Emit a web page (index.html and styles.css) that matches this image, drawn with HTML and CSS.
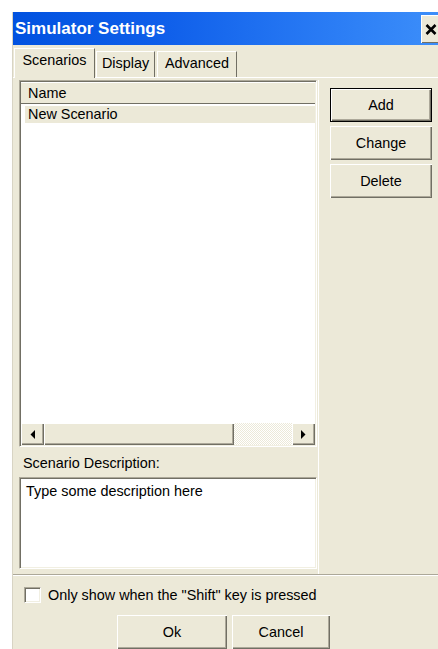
FILE: index.html
```html
<!DOCTYPE html>
<html lang="en">
<head>
<meta charset="utf-8">
<title>Simulator Settings</title>
<link rel="stylesheet" href="styles.css">
</head>
<body>
<div class="window">
  <div class="titlebar">
    <span class="title">Simulator Settings</span>
    <span class="close" aria-label="Close">
      <svg width="12" height="11" viewBox="0 0 12 11"><path d="M1.5 1 L10.5 10 M10.5 1 L1.5 10" stroke="#000" stroke-width="2.6" fill="none"/></svg>
    </span>
  </div>

  <div class="tabs">
    <div class="tab tab-scenarios active">Scenarios</div>
    <div class="tab tab-display">Display</div>
    <div class="tab tab-advanced">Advanced</div>
  </div>

  <div class="panel">
    <div class="left">
      <div class="listbox sunken">
        <div class="list-header">Name</div>
        <div class="list-rows">
          <div class="row selected">New Scenario</div>
        </div>
        <div class="hscroll">
          <div class="sb-btn raised">
            <svg width="5" height="9" viewBox="0 0 5 9"><path d="M5 0 L0.5 4.5 L5 9 Z" fill="#000"/></svg>
          </div>
          <div class="sb-thumb raised"></div>
          <div class="sb-track"></div>
          <div class="sb-btn raised">
            <svg width="5" height="9" viewBox="0 0 5 9"><path d="M0 0 L4.5 4.5 L0 9 Z" fill="#000"/></svg>
          </div>
        </div>
      </div>
      <div class="desc-label">Scenario Description:</div>
      <div class="desc sunken">Type some description here</div>
    </div>

    <div class="actions">
      <button class="btn btn-default">Add</button>
      <button class="btn">Change</button>
      <button class="btn">Delete</button>
    </div>
  </div>

  <div class="option">
    <span class="checkbox sunken"></span>
    <span class="option-label">Only show when the "Shift" key is pressed</span>
  </div>

  <div class="dialog-buttons">
    <button class="btn btn-ok">Ok</button>
    <button class="btn btn-cancel">Cancel</button>
  </div>
</div>
</body>
</html>
```

FILE: styles.css
```css
* { box-sizing: border-box; }

html, body {
  margin: 0;
  height: 100%;
  overflow: hidden;
  background: #fff;
}

body {
  font: 14.4px "Liberation Sans", Arial, sans-serif;
  color: #000;
}

/* dialog frame */
.window {
  margin: 12px 0 0 12px;
  width: 432px;
  height: 637px;
  background: #ece9d8;
  border-left: 1px solid #d8d4c4;
  display: flex;
  flex-direction: column;
}

.titlebar {
  height: 33px;
  flex: none;
  display: flex;
  align-items: flex-start;
  background: linear-gradient(to right, #0152e0 0%, #0f5fea 35%, #2b7df5 75%, #3d8ffa 100%);
}

.title {
  flex: 1;
  padding: 7px 0 0 2px;
  font-size: 17px;
  font-weight: bold;
  line-height: 20px;
  color: #fff;
}

.close {
  width: 22px;
  height: 28px;
  margin: 3px 1px 0 0;
  padding-left: 4px;
  display: flex;
  align-items: center;
  background: #ece9d8;
  box-shadow: inset 1px 1px #fff, inset -1px -1px #716f64;
}

/* tab strip */
.tabs {
  height: 32px;
  flex: none;
  display: flex;
  align-items: flex-end;
  padding-left: 1px;
}

.tab {
  height: 26px;
  padding-top: 3px;
  line-height: 16px;
  text-align: center;
  border: 1px solid #fff;
  border-right-color: #716f64;
  border-bottom: none;
  background: #ece9d8;
}

.tab.active {
  height: 30px;
  margin-bottom: -1px;
  position: relative;
  z-index: 1;
}

.tab-scenarios { width: 81px; }
.tab-display { width: 59px; margin-left: 1px; }
.tab-advanced { width: 80px; margin-left: 2px; }

/* tab page */
.panel {
  height: 498px;
  flex: none;
  display: flex;
  align-items: stretch;
  padding: 2px 0 0 6px;
  border-top: 1px solid #fff;
  border-bottom: 1px solid #aca899;
  box-shadow: 0 1px 0 #fff;
}

.left {
  width: 300px;
  padding-right: 1px;
  border-right: 1px solid #fff;
  display: flex;
  flex-direction: column;
}

.sunken {
  border: 1px solid;
  border-color: #aca899 #fff #fff #aca899;
  box-shadow: inset 1px 1px #716f64, inset -1px -1px #f1efe2;
}

.raised {
  background: #ece9d8;
  box-shadow: inset 1px 1px #fff, inset -1px -1px #716f64, inset -2px -2px #aca899;
}

.listbox {
  width: 298px;
  height: 367px;
  padding: 1px;
  display: flex;
  flex-direction: column;
  background: #fff;
}

.list-header {
  height: 22px;
  flex: none;
  padding-left: 7px;
  line-height: 22px;
  background: #ece9d8;
  border-bottom: 1px solid #716f64;
  box-shadow: inset 0 1px #fff;
}

.list-rows {
  flex: 1;
  padding-top: 2px;
  background: #fff;
}

.row {
  height: 17px;
  margin-left: 4px;
  padding-left: 3px;
  line-height: 17px;
}

.row.selected { background: #ece9d8; }

.hscroll {
  height: 22px;
  flex: none;
  display: flex;
}

.sb-btn {
  width: 23px;
  display: flex;
  align-items: center;
  justify-content: center;
}

.sb-thumb { width: 190px; }

.sb-track {
  flex: 1;
  background-color: #fff;
  background-image: repeating-conic-gradient(#ece9d8 0 25%, #fff 0 50%);
  background-size: 2px 2px;
}

.desc-label {
  margin-top: 8px;
  padding-left: 4px;
  line-height: 16px;
}

.desc {
  width: 298px;
  height: 92px;
  margin-top: 6px;
  padding: 5px 6px;
  line-height: 16px;
  background: #fff;
}

/* command buttons */
.actions {
  margin: 8px 0 0 11px;
  display: flex;
  flex-direction: column;
  gap: 4px;
}

.btn {
  height: 34px;
  width: 102px;
  padding: 0;
  border: none;
  font: inherit;
  color: #000;
  background: #ece9d8;
  box-shadow: inset 1px 1px #fff, inset -1px -1px #716f64, inset -2px -2px #aca899;
}

.btn-default {
  border: 1px solid #000;
}

/* footer */
.option {
  display: flex;
  align-items: center;
  padding: 12px 0 0 11px;
}

.checkbox {
  width: 17px;
  height: 16px;
  background: #fff;
}

.option-label {
  margin-left: 7px;
  line-height: 16px;
}

.dialog-buttons {
  display: flex;
  gap: 5px;
  padding: 12px 0 0 104px;
}

.btn-ok { width: 110px; }
.btn-cancel { width: 98px; }
```
